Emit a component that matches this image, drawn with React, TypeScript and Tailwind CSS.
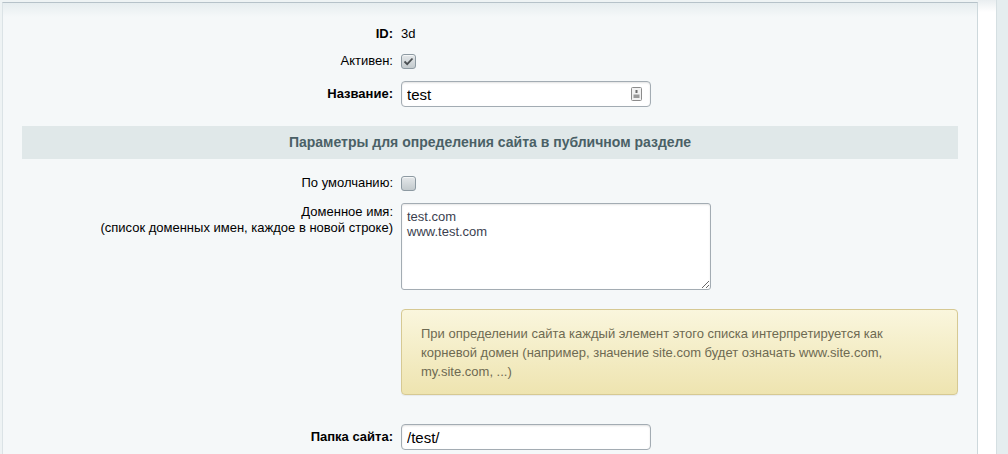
import React from 'react';

function CheckBox({ checked }: { checked?: boolean }) {
  return (
    <span className="inline-flex h-[15px] w-[15px] items-center justify-center rounded-[3px] border border-[#8d9aa2] bg-[linear-gradient(#e4e8ea,#c3cacd)] shadow-[inset_0_1px_0_#f4f6f7]">
      {checked && (
        <svg width="11" height="9" viewBox="0 0 11 9">
          <path d="M1.5 4.5 L4.2 7.2 L9.5 1.5" fill="none" stroke="#4a4f52" strokeWidth="1.8" />
        </svg>
      )}
    </span>
  );
}

function Row({ label, bold, children, className = '' }: { label: React.ReactNode; bold?: boolean; children: React.ReactNode; className?: string }) {
  return (
    <div className={`flex items-center ${className}`}>
      <div className={`w-[375px] shrink-0 pr-[4px] text-right text-black ${bold ? 'font-bold' : ''}`}>{label}</div>
      <div className="flex-1 pl-[4px]">{children}</div>
    </div>
  );
}

export default function App() {
  return (
    <div className="flex h-[454px] w-[1008px] overflow-hidden bg-[#eef3f4] font-['Liberation_Sans',Arial,sans-serif] text-[13px]">
      {/* основная панель */}
      <div className="ml-[2px] mt-[2px] w-[976px] shrink-0 border-l border-r border-t border-l-[#dbe3e6] border-r-[#cdd8dc] border-t-[#b6c2c9] bg-[linear-gradient(#e6edef,#f5f8f9_14px)]">
        <div className="px-[19px]">
          <Row label="ID:" bold className="mt-[21px] h-[20px]">
            <span className="text-[#000]">3d</span>
          </Row>
          <Row label="Активен:" className="mt-[7px] h-[20px]">
            <div className="flex">
              <CheckBox checked />
            </div>
          </Row>
          <Row label="Название:" bold className="mt-[10px] h-[26px]">
            <div className="relative h-[26px] w-[250px]">
              <input
                readOnly
                defaultValue="test"
                className="h-[26px] w-[250px] rounded-[4px] border border-[#a3acb3] bg-white pl-[5px] text-[15px] text-black shadow-[inset_0_1px_2px_rgba(0,0,0,0.12)] outline-none"
              />
              <svg className="absolute right-[9px] top-[6px]" width="11" height="14" viewBox="0 0 11 14">
                <rect x="0.5" y="0.5" width="10" height="13" rx="1" fill="#f2f2f2" stroke="#8c8c8c" />
                <rect x="4.5" y="3" width="2" height="3" fill="#6d6d6d" />
                <rect x="2.5" y="7.5" width="6" height="3.5" fill="#9a9a9a" />
              </svg>
            </div>
          </Row>

          <div className="mt-[19px] flex h-[33px] items-center justify-center bg-[#e0e8e9] text-[14px] font-bold text-[#4a6066]">
            Параметры для определения сайта в публичном разделе
          </div>

          <Row label="По умолчанию:" className="mt-[15px] h-[18px]">
            <div className="flex">
              <CheckBox />
            </div>
          </Row>

          <div className="mt-[11px] flex items-start">
            <div className="w-[375px] shrink-0 pr-[4px] pt-[1px] text-right leading-[16px] text-black">
              Доменное имя:
              <br />
              (список доменных имен, каждое в новой строке)
            </div>
            <div className="flex-1 pl-[4px]">
              <textarea
                readOnly
                defaultValue={'test.com\nwww.test.com'}
                className="block h-[87px] w-[310px] rounded-[3px] border border-[#a3acb3] bg-white px-[5px] pt-[5px] text-[13px] leading-[15px] text-[#3b3f4f] shadow-[inset_0_1px_2px_rgba(0,0,0,0.1)] outline-none"
              />
            </div>
          </div>

          <div className="mt-[19px] flex">
            <div className="w-[375px] shrink-0" />
            <div className="flex-1 pl-[4px]">
              <div className="h-[86px] rounded-[4px] border border-[#d6c993] bg-[linear-gradient(#faf6dd,#eee4b0)] px-[19px] pt-[14px] leading-[19px] text-[#6e6a52] shadow-[0_1px_1px_rgba(0,0,0,0.06)]">
                При определении сайта каждый элемент этого списка интерпретируется как
                <br />
                корневой домен (например, значение site.com будет означать www.site.com,
                <br />
                my.site.com, ...)
              </div>
            </div>
          </div>

          <Row label="Папка сайта:" bold className="mt-[29px] h-[26px]">
            <input
              readOnly
              defaultValue="/test/"
              className="h-[26px] w-[250px] rounded-[4px] border border-[#a3acb3] bg-white pl-[5px] text-[15px] text-black shadow-[inset_0_1px_2px_rgba(0,0,0,0.12)] outline-none"
            />
          </Row>
        </div>
      </div>

      {/* правая полоса */}
      <div className="w-[18px] shrink-0 bg-[linear-gradient(#e9eef0,#ffffff_12px)]" />
      <div className="flex-1 border-l border-[#d5dfe2] bg-[#e5edef]" />
    </div>
  );
}
